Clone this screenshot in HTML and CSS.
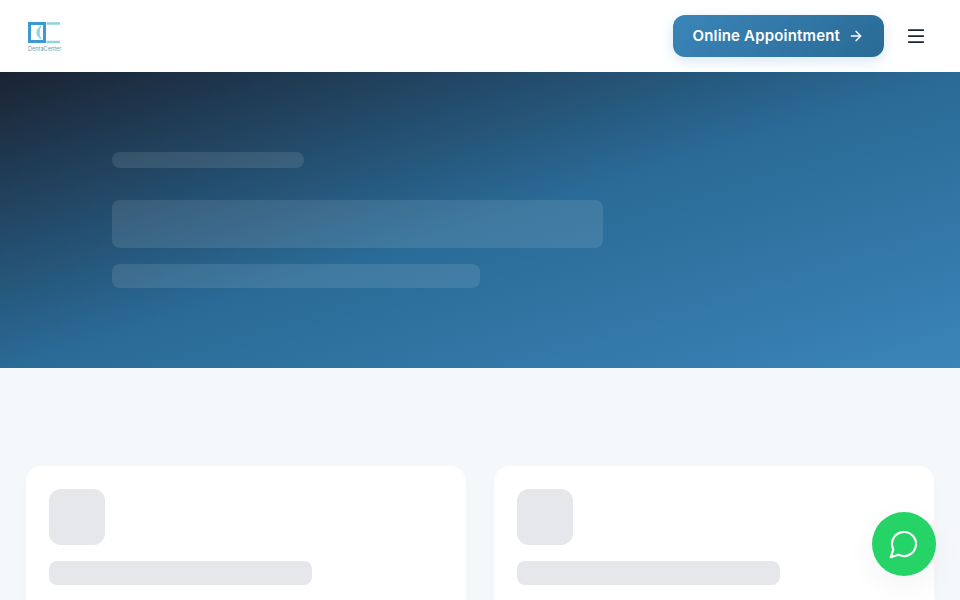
FILE: index.html
```html
<!DOCTYPE html>
<html lang="en">
<head>
    <meta charset="UTF-8">
    <meta name="viewport" content="width=device-width, initial-scale=1.0">
    <title>DentaCenter</title>
    <link rel="stylesheet" href="styles.css">
</head>
<body>
    <header class="site-header">
        <a class="logo" href="#">
            <svg class="logo-mark" width="32" height="22" viewBox="0 0 32 22" fill="none">
                <path d="M1.5 1.5H16.5V19.5H1.5Z" stroke="#3b9ad2" stroke-width="3"/>
                <path d="M18.5 1.5H32M18.5 20H32" stroke="#8fd3dc" stroke-width="2.6"/>
                <path d="M13 4C7.5 8 7.5 13 13 17C10.5 12.5 10.5 8.5 13 4Z" fill="#8fd3dc" stroke="#8fd3dc"/>
            </svg>
            <span class="logo-text">DentaCenter</span>
        </a>
        <div class="header-actions">
            <a class="btn-appointment" href="#">
                <span class="btn-label">Online Appointment</span>
                <svg width="16" height="16" viewBox="0 0 24 24" fill="none" stroke="currentColor" stroke-width="2" stroke-linecap="round" stroke-linejoin="round">
                    <path d="M5 12h14"/>
                    <path d="m12 5 7 7-7 7"/>
                </svg>
            </a>
            <button class="menu-toggle" aria-label="Menu">
                <svg width="24" height="24" viewBox="0 0 24 24" fill="none" stroke="#1a2332" stroke-width="1.75" stroke-linecap="round">
                    <path d="M4.75 6h14.5"/>
                    <path d="M4.75 12h14.5"/>
                    <path d="M4.75 18h14.5"/>
                </svg>
            </button>
        </div>
    </header>

    <section class="hero">
        <div class="skeleton hero-line-sm"></div>
        <div class="skeleton hero-line-lg"></div>
        <div class="skeleton hero-line-md"></div>
    </section>

    <main class="content">
        <div class="card-grid">
            <div class="card">
                <div class="skeleton-gray card-icon"></div>
                <div class="skeleton-gray card-title"></div>
            </div>
            <div class="card">
                <div class="skeleton-gray card-icon"></div>
                <div class="skeleton-gray card-title"></div>
            </div>
        </div>
    </main>

    <a class="chat-fab" href="#" aria-label="Chat">
        <svg width="32" height="32" viewBox="0 0 24 24" fill="none" stroke="#fff" stroke-width="1.6" stroke-linecap="round" stroke-linejoin="round">
            <path d="M7.9 20A9 9 0 1 0 4 16.1L2 22Z"/>
        </svg>
    </a>
</body>
</html>
```

FILE: styles.css
```css
* {
    box-sizing: border-box;
}
body {
    font-family: Inter, 'Liberation Sans', sans-serif;
    margin: 0;
    background: #f5f8fb;
    color: #1a2332;
}
.site-header {
    height: 72px;
    padding: 0 32px 0 28px;
    background: #fff;
    display: flex;
    align-items: center;
    justify-content: space-between;
}
.logo {
    display: flex;
    flex-direction: column;
    gap: 2px;
    padding-top: 3px;
    text-decoration: none;
}
.logo-mark {
    display: block;
}
.logo-text {
    font-size: 5.6px;
    line-height: 7px;
    color: #6f9db0;
}
.header-actions {
    display: flex;
    align-items: center;
    gap: 20px;
}
.btn-appointment {
    height: 42px;
    padding: 0 20px;
    display: flex;
    align-items: center;
    gap: 8px;
    border-radius: 12px;
    background: linear-gradient(135deg, #3a85b8 0%, #2a6a96 100%);
    box-shadow: 0 4px 14px rgba(58,133,184,0.2);
    color: #fff;
    font-size: 15px;
    font-weight: 600;
    letter-spacing: 0.17px;
    text-decoration: none;
}
.btn-label {
    margin-bottom: 2px;
}
.menu-toggle {
    width: 24px;
    height: 24px;
    padding: 0;
    border: none;
    background: none;
    cursor: pointer;
}
.menu-toggle svg {
    display: block;
}
.hero {
    height: 296px;
    padding: 80px 112px;
    background: linear-gradient(to bottom right, #1a2332 0%, #2a6a96 50%, #3a85b8 100%);
}
.skeleton {
    background: rgba(255,255,255,0.1);
}
.hero-line-sm {
    width: 192px;
    height: 16px;
    border-radius: 8px;
    margin-bottom: 32px;
}
.hero-line-lg {
    width: 491px;
    height: 48px;
    border-radius: 8px;
    margin-bottom: 16px;
}
.hero-line-md {
    width: 368px;
    height: 24px;
    border-radius: 8px;
}
.content {
    padding: 98px 26px 40px;
}
.card-grid {
    display: grid;
    grid-template-columns: 1fr 1fr;
    gap: 28px;
}
.card {
    padding: 23px;
    min-height: 240px;
    background: #fff;
    border-radius: 16px;
    box-shadow: 0 4px 20px rgba(0,0,0,0.01);
}
.skeleton-gray {
    background: #e5e7eb;
}
.card-icon {
    width: 56px;
    height: 56px;
    border-radius: 12px;
    margin-bottom: 16px;
}
.card-title {
    width: 263px;
    height: 24px;
    border-radius: 8px;
}
.chat-fab {
    position: fixed;
    right: 24px;
    bottom: 24px;
    width: 64px;
    height: 64px;
    border-radius: 50%;
    background: #25d366;
    display: flex;
    align-items: center;
    justify-content: center;
    box-shadow: 0 10px 30px rgba(0,0,0,0.05);
}
```
